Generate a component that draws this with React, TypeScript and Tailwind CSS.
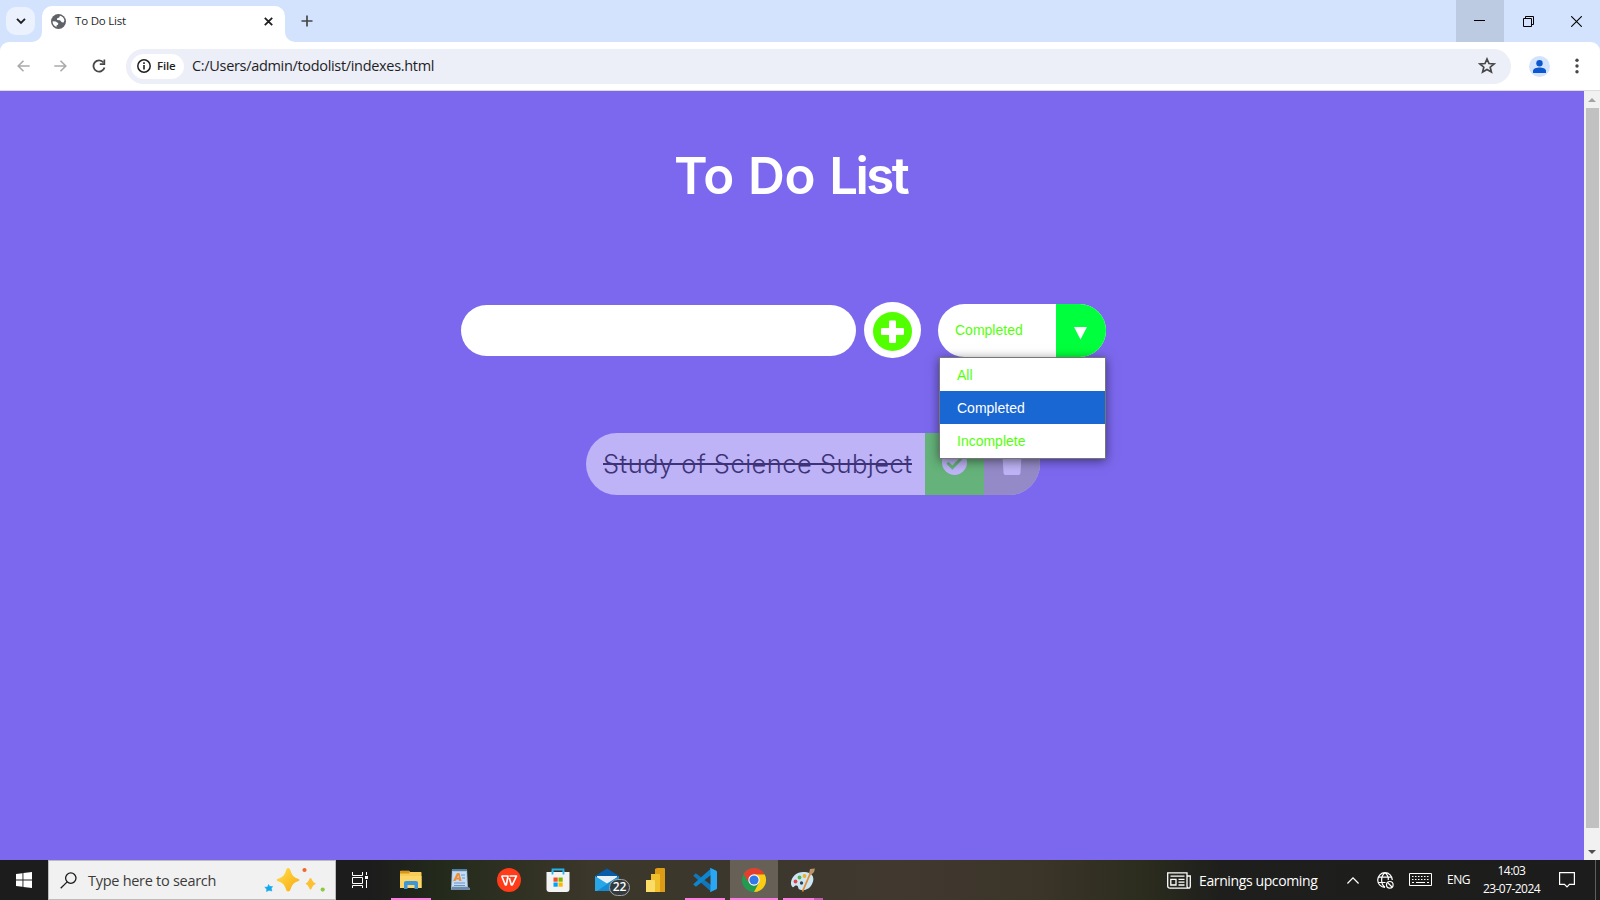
import React from "react";

const ui = "font-['Open_Sans','Noto_Sans',sans-serif] whitespace-nowrap";

function TabStrip() {
  return (
    <div className="flex h-[42px] bg-[#d3e3fd]">
      <div className="flex w-[42px] justify-start pl-[6px] pt-[7px]">
        <div className="flex h-7 w-[29px] items-center justify-center rounded-[10px] bg-[#ebf2fe]">
          <svg width="10" height="8" viewBox="0 0 10 8" fill="none" stroke="#1f1f1f" strokeWidth="1.9"><path d="M1 1.8 5 5.8 9 1.8" /></svg>
        </div>
      </div>
      <div className="relative mt-[6px] flex h-9 w-[243px] items-center rounded-t-[10px] bg-white">
        <svg className="absolute -left-[10px] bottom-0" width="10" height="10"><path d="M10 0V10H0A10 10 0 0 0 10 0Z" fill="#fff" /></svg>
        <svg className="absolute -right-[10px] bottom-0" width="10" height="10"><path d="M0 0V10H10A10 10 0 0 1 0 0Z" fill="#fff" /></svg>
        <svg className="mb-[6px] ml-[9px] shrink-0" width="15" height="15" viewBox="0 0 15 15">
          <circle cx="7.5" cy="7.5" r="7.5" fill="#5f6368" />
          <path d="M8.8 1.8 8.3 3.6 6.2 4.2 6 6 9 6.3 10.8 8.2 12.6 8.4 13.4 6.3A6 6 0 0 0 8.8 1.8ZM1.6 7.3 4.8 7.4 7.3 9.2 7 10.8 5.500 11.400 5.500 13A6 6 0 0 1 1.600 7.300Z" fill="#fff" />
        </svg>
        <span className={`${ui} mb-[7px] ml-[9px] w-[181px] text-[11.5px] leading-4 tracking-[-0.2px] text-[#1f1f1f]`}>To Do List</span>
        <svg className="mb-[6px] ml-[8px]" width="9" height="9" viewBox="0 0 9 9" stroke="#1f1f1f" strokeWidth="1.8"><path d="M.8.8 8.2 8.2M8.2.8.8 8.2" /></svg>
      </div>
      <svg className="ml-[16px] mt-[15px]" width="12" height="12" viewBox="0 0 12 12" stroke="#474747" strokeWidth="1.7"><path d="M6 .5V11.5M.5 6H11.5" /></svg>
      <div className="ml-auto flex">
        <div className="flex w-12 items-center justify-center bg-[#bccbe2]">
          <svg className="mr-px mb-px" width="11" height="11" viewBox="0 0 11 11" shapeRendering="crispEdges"><path d="M0 5h11v1H0Z" fill="#000" /></svg>
        </div>
        <div className="flex w-12 items-center justify-center">
          <svg width="11" height="11" viewBox="0 0 11 11" fill="none" stroke="#000"><path d="M.5 2.5h8v8h-8ZM2.5 2.5V.5h8v8h-2" /></svg>
        </div>
        <div className="flex w-12 items-center justify-center">
          <svg width="11" height="11" viewBox="0 0 11 11" stroke="#000" strokeWidth="1.1"><path d="M.2.2 10.8 10.8M10.8.2.2 10.8" /></svg>
        </div>
      </div>
    </div>
  );
}

function Toolbar() {
  return (
    <div className="bg-[#d3e3fd]">
      <div className="flex h-[49px] items-center rounded-t-[9px] border-b border-[#dcdcdc] bg-white">
        <svg className="ml-[17px]" width="13" height="12" viewBox="0 0 13 12" fill="none" stroke="#aaaaaa" strokeWidth="1.6"><path d="M12.7 6H1.3M6.5.7 1.2 6 6.5 11.3" /></svg>
        <svg className="ml-[24px]" width="13" height="12" viewBox="0 0 13 12" fill="none" stroke="#aaaaaa" strokeWidth="1.6"><path d="M.3 6H11.7M6.5.7 11.8 6 6.5 11.3" /></svg>
        <svg className="ml-[25px]" width="14" height="14" viewBox="0 0 14 14"><path d="M11.5 3.5A5.6 5.6 0 1 0 12.5 8.4" fill="none" stroke="#474747" strokeWidth="1.8" /><path d="M13.2.6V6H7.8V4.3H11.5V.6Z" fill="#474747" /></svg>
        <div className="ml-[20px] flex h-[35px] w-[1385px] items-center rounded-full bg-[#eceef8]">
          <div className="ml-[5px] flex h-[25px] w-[53px] items-center rounded-full bg-white">
            <svg className="ml-[6px] shrink-0" width="14" height="14" viewBox="0 0 14 14"><circle cx="7" cy="7" r="6.2" fill="none" stroke="#1f1f1f" strokeWidth="1.5" /><path d="M6.2 3.3h1.6v1.6H6.2ZM6.2 6h1.6v4.6H6.2Z" fill="#1f1f1f" /></svg>
            <span className={`${ui} ml-[6px] text-[11.5px] font-semibold tracking-[-0.2px] text-[#1f1f1f]`}>File</span>
          </div>
          <span className={`${ui} ml-[8px] text-[14.5px] tracking-[-0.32px] text-[#1f1f1f]`}>C:/Users/admin/todolist/indexes.html</span>
          <svg className="mb-px ml-auto mr-[15px]" width="18" height="17" viewBox="0 0 18 17" fill="none" stroke="#474747" strokeWidth="1.7"><path d="M9 2 11 6.5 16 7 12.2 10.2 13.4 15.1 9 12.5 4.6 15.1 5.8 10.2 2 7 7 6.5Z" /></svg>
        </div>
        <svg className="ml-[18px]" width="21" height="21" viewBox="0 0 21 21"><circle cx="10.5" cy="10.5" r="10.5" fill="#d3e3fd" /><circle cx="10.5" cy="7.3" r="3.2" fill="#0b57d0" /><path d="M4 17V15C4 12.7 7.5 11.6 10.5 11.6S17 12.7 17 15V17Z" fill="#0b57d0" /></svg>
        <svg className="ml-[25px]" width="4" height="16" viewBox="0 0 4 16" fill="#474747"><circle cx="2" cy="2.2" r="1.7" /><circle cx="2" cy="8" r="1.7" /><circle cx="2" cy="13.8" r="1.7" /></svg>
      </div>
    </div>
  );
}

function FilterSelect() {
  const row = "flex h-[33px] items-center pl-[17px] pt-[2px]";
  return (
    <div className="relative ml-[17px] h-[53px] w-[168px] font-['Liberation_Sans',Arial,sans-serif] text-[14px]">
      <div className="flex h-full overflow-hidden rounded-full bg-white">
        <div className="flex w-[118px] items-center pl-[17px] text-[#55ff0c]">Completed</div>
        <div className="flex flex-1 items-center justify-center bg-[#00ff3c]">
          <svg className="mt-[6px] mr-px" width="13" height="13" viewBox="0 0 13 13"><path d="M0 0H13L6.5 12.6Z" fill="#fff" /></svg>
        </div>
      </div>
      <div className="absolute left-[1px] top-[53px] z-10 h-[102px] w-[167px] border border-[#767676] bg-white text-[#55ff0c] shadow-[0_2px_10px_rgba(0,0,0,0.5)]">
        <div className={row}>All</div>
        <div className={`${row} bg-[#1967d2] text-white`}>Completed</div>
        <div className={row}>Incomplete</div>
      </div>
    </div>
  );
}

function Page() {
  return (
    <main className="w-[1584px] bg-[#7b68ee]">
      <h1 className="ml-[674px] pt-[53px] font-['Inter',sans-serif] text-[51px] font-semibold leading-[64px] tracking-[-0.5px] whitespace-nowrap text-white [word-spacing:2px]">To Do <span className="tracking-[-2.6px]">List</span></h1>
      <div className="ml-[461px] mt-[94px] flex items-center">
        <input className="h-[51px] w-[395px] rounded-full bg-white outline-none" aria-label="New task" />
        <button className="ml-[8px] flex h-[56px] w-[57px] items-center justify-center rounded-full bg-white" aria-label="Add">
          <svg className="mt-[2px]" width="39" height="39" viewBox="0 0 39 39"><circle cx="19.5" cy="19.5" r="19.5" fill="#52ff00" /><path d="M16 9.5Q16 8.5 17 8.5H22Q23 8.5 23 9.5V16H30Q31 16 31 17V22Q31 23 30 23H23V30Q23 31 22 31H17Q16 31 16 30V23H9Q8 23 8 22V17Q8 16 9 16H16Z" fill="#fff" /></svg>
        </button>
        <FilterSelect />
      </div>
      <div className="ml-[586px] mt-[75px] flex h-[62px] w-[454px] overflow-hidden rounded-full bg-[#bdb3f6]">
        <div className="flex w-[339px] items-center pl-[17px]">
          <span className="relative font-['Inter',sans-serif] text-[25.5px] font-light tracking-[0.47px] whitespace-nowrap text-[#3e3378]">
            Study of Science Subject
            <span className="absolute inset-x-0 top-[18px] h-[2px] bg-[#3e3378]" />
          </span>
        </div>
        <div className="flex w-[59px] items-center justify-center bg-[#65b27a] pb-[4px]">
          <svg width="25" height="25" viewBox="0 0 25 25"><circle cx="12.5" cy="12.5" r="12.5" fill="#bdb3f6" /><path d="M5.5 12.8 10.4 17.6 19.5 8.3" fill="none" stroke="#65b27a" strokeWidth="3" /></svg>
        </div>
        <div className="flex flex-1 items-center bg-[#948ac8] pb-[4px] pl-[17px]">
          <svg width="22" height="25" viewBox="0 0 22 25" fill="#bdb3f6"><path d="M0 1.5H6L7.5 0H14.5L16 1.5H22V4.5H0ZM1.5 6H20.5L19.5 23Q19.4 25 17.5 25H4.5Q2.6 25 2.5 23Z" /></svg>
        </div>
      </div>
    </main>
  );
}

function Scrollbar() {
  return (
    <div className="flex w-4 flex-col items-center bg-[#f1f1f1]">
      <svg className="mt-[7px]" width="8" height="4" viewBox="0 0 8 4"><path d="M0 4 4 0 8 4Z" fill="#a3a3a3" /></svg>
      <div className="mt-[6px] h-[720px] w-[13px] bg-[#c1c1c1]" />
      <svg className="mt-[22px]" width="8" height="4" viewBox="0 0 8 4"><path d="M0 0H8L4 4Z" fill="#505050" /></svg>
    </div>
  );
}

function Cell({ children, bar, active }: { children: React.ReactNode; bar?: React.ReactNode; active?: boolean }) {
  return (
    <div className={active ? "relative mr-px flex h-10 w-12 items-center justify-center bg-[#666057]" : "relative mr-px flex h-10 w-12 items-center justify-center"}>
      {children}
      {bar}
    </div>
  );
}

const bar = <span className="absolute bottom-0 left-1 h-[2px] w-10 bg-[#ff7be5]" />;

function Taskbar() {
  return (
    <footer className="flex h-10 bg-[linear-gradient(90deg,#1c1c1c_0,#1c1c1c_370px,#232a1b_440px,#3b372a_590px,#3c372d_760px,#41392f_900px,#3b3429_1040px,#2c2d1e_1140px,#1e1e1c_1220px,#1c1c1c_1600px)] text-white">
      <div className="flex w-12 items-center justify-center">
        <svg width="16" height="16" viewBox="0 0 16 16" fill="#fff"><path d="M0 2.1 6.5 1.2V7.5H0ZM7.4 1.1 16 0V7.5H7.4ZM0 8.4H6.5V14.8L0 13.9ZM7.4 8.4H16V16L7.4 14.9Z" /></svg>
      </div>
      <div className="flex w-[288px] items-center border border-[#bcbcbc] bg-[#f1f1f1]">
        <svg className="ml-[11px] shrink-0" width="17" height="17" viewBox="0 0 17 17" fill="none" stroke="#1a1a1a" strokeWidth="1.3"><circle cx="10.8" cy="6.1" r="5.2" /><path d="M7.2 9.9.7 16.3" /></svg>
        <span className={`${ui} ml-[11px] mt-px w-[176px] text-[14.5px] tracking-[-0.28px] text-[#3b3b3b]`}>Type here to search</span>
        <svg className="mb-px shrink-0" width="62" height="26" viewBox="0 0 62 26">
          <defs><linearGradient id="star" x1="0" y1="0" x2="1" y2="1"><stop stopColor="#ffe04a" /><stop offset="1" stopColor="#f9a811" /></linearGradient></defs>
          <path d="M24 1Q26 1 27 5Q28.500 9.500 32 11Q35.500 12 35.500 13Q35.500 14 32 15Q28.500 16.500 27 21Q26 24.500 24 24.500Q22.500 24.500 21.500 21Q20 16.500 16 15Q12.500 14 12.500 13Q12.500 12 16 11Q20 9.500 21.500 5Q22.500 1 24 1Z" fill="url(#star)" />
          <path d="M46.500 11Q47.500 11 48 13Q49 15.500 52 16.800Q49 18 48 20.500Q47.500 22.500 46.500 22.500Q45.500 22.500 45 20.500Q44 18 41.500 16.800Q44 15.500 45 13Q45.500 11 46.500 11Z" fill="#fcc130" />
          <path d="M4.500 17.500 5.800 19.500 8.500 19.500 7.300 21.500 7.800 24 5 23.300 2.500 24.500 2.800 22.200.800 20.300 3.700 20Z" fill="#12a9ec" stroke="#12a9ec" strokeWidth=".6" />
          <circle cx="40.500" cy="3" r="2.100" fill="#f4652e" /><circle cx="58.700" cy="22.600" r="2.100" fill="#89ca3e" />
        </svg>
      </div>
      <div className="mr-[3px] flex w-12 items-center justify-center">
        <svg width="16" height="16" viewBox="0 0 16 16" fill="none" stroke="#fff"><path d="M.5 0V3.500H10.500V0M.5 5.500H10.500V11.500H.5ZM.5 16V13.500H10.500V16M14.500 0V3M14.500 8V16" /><path d="M13 4h3v3h-3Z" fill="#fff" stroke="none" /></svg>
      </div>
      <Cell bar={bar}>
        <svg width="22" height="20" viewBox="0 0 22 20"><path d="M0 1.500Q0 .8 1 .8H9L10 2H21Q21.500 2 21.500 3V18H0Z" fill="#f9cb57" /><path d="M0 1.500Q0 1 1 1H9.500V3.500H0Z" fill="#d99513" /><path d="M0 6H21.500V18H0Z" fill="#fdd668" /><path d="M4 19V12.500Q4 11 6 11H16Q18 11 18 12.500V19H14.500V15H7.500V19Z" fill="#3d96d9" /></svg>
      </Cell>
      <Cell>
        <svg className="mb-[2px]" width="20" height="23" viewBox="0 0 20 23"><path d="M2 1H17L18 22H1Z" fill="#aec8e4" /><path d="M2 1H17V3H2Z" fill="#547da3" /><path d="M3 4H16L17 18H2Z" fill="#c5ddf4" /><path d="M3 13 7 5H9.500L11.500 13H9.300L9 11.500H6.300L5.500 13ZM7.200 9.800H8.800L8.400 7.200Z" fill="#ee8d35" /><path d="M11 7H15M12 10H15M4 15H15M4 17.500H15" stroke="#6894c8" /><path d="M1 22 2 19H18L20 20V22Z" fill="#6d8ba9" /></svg>
      </Cell>
      <Cell>
        <svg width="24" height="24" viewBox="0 0 24 24"><circle cx="12" cy="12" r="12" fill="#ff3b19" /><path d="M4.500 8H11L9.300 16.800 8.300 16.800 4.700 8M12.500 8H19.500L15.300 16.800H14.300L12.300 10" fill="none" stroke="#fff" strokeWidth="1.700" strokeLinejoin="round" /></svg>
      </Cell>
      <Cell>
        <svg width="24" height="24" viewBox="0 0 24 24"><path d="M6.500 7V1.500H17.500V7" fill="none" stroke="#26b4ec" strokeWidth="1.800" /><path d="M.500 4H23.500V21Q23.500 24 20.500 24H3.500Q.5 24 .5 21Z" fill="#f3f3f3" /><path d="M7.500 9.500h4.200v4.200H7.500Z" fill="#f05122" /><path d="M12.500 9.500h4.200v4.200h-4.200Z" fill="#7eb900" /><path d="M7.500 14.500h4.200v4.200H7.500Z" fill="#00a3ee" /><path d="M12.500 14.500h4.200v4.200h-4.200Z" fill="#feb800" /><path d="M6.500 3V6.500M17.500 3V6.500" stroke="#26b4ec" strokeWidth="1.800" /></svg>
      </Cell>
      <Cell>
        <svg className="mb-px" width="24" height="24" viewBox="0 0 24 24"><path d="M0 8 12 .5 24 8V14H0Z" fill="#075ba9" /><path d="M2 8H22V16H2Z" fill="#eaf0f4" /><path d="M0 8 12 15.500 24 8V23H0Z" fill="#27a6e8" /><path d="M24 8V23H2Z" fill="#168bd5" /></svg>
        <span className="absolute left-[26px] top-[19px] flex h-[17px] w-[21px] items-center justify-center rounded-full border border-[#a5a5a5] bg-[#333b3e] pb-px font-['Open_Sans',sans-serif] text-[12px] font-semibold leading-none">22</span>
      </Cell>
      <Cell>
        <svg className="mr-[2px]" width="20" height="24" viewBox="0 0 20 24"><path d="M12 0H19Q20 0 20 1V24H10V1Z" fill="#dd9c13" /><path d="M6 6H14Q15 6 15 7V24H6Z" fill="#efbf2c" /><path d="M1 12H9Q10 12 10 13V24H1Z" fill="#fadd66" /></svg>
      </Cell>
      <Cell bar={bar}>
        <svg width="24" height="24" viewBox="0 0 24 24"><path d="M1 7 2.500 5.500Q3 5.200 3.500 5.700L18 17V23.500L.5 8Q0 7.500 1 7Z" fill="#1177bb" /><path d="M1 17 2.500 18.500Q3 18.800 3.500 18.300L18 7V.5L.5 16Q0 16.500 1 17Z" fill="#0d86cf" /><path d="M17.500 0 23 2.500Q24 3 24 4V20Q24 21 23 21.500L17.500 24Q16.500 24 17.500 22.500V1.500Q16.500 0 17.500 0Z" fill="#2aa6f2" /></svg>
      </Cell>
      <Cell active bar={<span className="absolute bottom-0 left-0 h-[2px] w-12 bg-[#ff7be5]" />}>
        <svg width="24" height="24" viewBox="0 0 24 24"><circle cx="12" cy="12" r="12" fill="#229b50" /><path d="M12 12 1.600 6A12 12 0 0 1 22.400 6Z" fill="#e43e2f" /><path d="M12 6.500H22.700A12 12 0 0 1 12 24L17 14.500Z" fill="#fccb14" /><path d="M1.600 6 7 15 12 6.500Z" fill="#e43e2f" /><circle cx="12" cy="12" r="5.700" fill="#fff" /><circle cx="12" cy="12" r="4.600" fill="#3278e8" /></svg>
      </Cell>
      <Cell bar={<span className="absolute bottom-0 left-1 flex h-[2px] w-10 bg-[#c45cb1]"><span className="w-[31px] bg-[#ff7be5]" /></span>}>
        <svg width="24" height="24" viewBox="0 0 24 24"><path d="M0 16C-.5 9 6 3 14 4C21 4.500 24 9 21.500 15C19 21.500 13 23 8.500 21.500C6.500 20.500 8 18 5.500 17.500C3 17 3 20 1.500 19Q.3 18 0 16Z" fill="#cce6f4" /><circle cx="4.500" cy="13.500" r="1.900" fill="#e44343" /><circle cx="8.500" cy="9.500" r="1.900" fill="#51b64f" /><circle cx="13.500" cy="8" r="1.900" fill="#f2ae28" /><circle cx="10.500" cy="15" r="1.700" fill="#36434d" /><path d="M11.500 23.500 19.500 5" stroke="#e58c32" strokeWidth="1.800" /><path d="M18 6 19 1 24 .5 23 4 20 7Z" fill="#bd9465" /></svg>
      </Cell>
      <div className="ml-auto flex w-[433px] items-center">
        <svg className="shrink-0" width="24" height="17" viewBox="0 0 24 17" fill="none" stroke="#fff" strokeWidth="1.300"><path d="M20 4H23.300V14Q23.300 16.200 21.500 16.200H3Q.7 16.200.7 14V.9H20V14Q20 16 21.500 16" /><path d="M3.500 4.200H17.500M11.500 7.300H17.500M11.500 10.200H17.500M11.500 13H17.500M3.800 7.300H9V13H3.800Z" /></svg>
        <span className={`${ui} ml-[8px] w-[148px] text-[14px] tracking-[-0.38px]`}>Earnings upcoming</span>
        <svg className="shrink-0" width="12" height="7" viewBox="0 0 12 7" fill="none" stroke="#fff" strokeWidth="1.300"><path d="M.4 6.500 6 .9 11.600 6.500" /></svg>
        <svg className="ml-[18px] shrink-0" width="17" height="17" viewBox="0 0 17 17" fill="none" stroke="#fff" strokeWidth="1.200"><path d="M8 15.300A7.300 7.300 0 1 1 15.300 8M8 .7C3.500 4 3.500 12 8 15.300M8 .7C10.500 2.500 11.500 5.500 11.300 8M1.200 5.200H14.800M1.200 10.500H8.500" /><circle cx="12.800" cy="12.800" r="3.300" /><path d="M10.500 10.500 15 15" /></svg>
        <svg className="mb-px ml-[15px] shrink-0" width="23" height="13" viewBox="0 0 23 13" fill="none" stroke="#fff"><path d="M.5.5H22.500V12.500H.5Z" /><path d="M3 3.500H21M3 6.500H21" strokeDasharray="1.500 1.500" /><path d="M3 9.500H5M7 9.500H16M18 9.500H20" /></svg>
        <span className={`${ui} ml-[15px] w-[35px] text-[12px] tracking-[-0.5px]`}>ENG</span>
        <div className={`${ui} flex w-[59px] flex-col items-center text-[12px] leading-[18px] tracking-[-0.55px]`}><span>14:03</span><span>23-07-2024</span></div>
        <svg className="ml-[18px] shrink-0" width="16" height="16" viewBox="0 0 16 16" fill="none" stroke="#fff" strokeWidth="1.200"><path d="M.6.6H15.400V12.400H10.500L8 15 5.500 12.400H.6Z" /></svg>
        <span className="ml-[20px] h-10 w-px bg-[#5f5f5f]" />
      </div>
    </footer>
  );
}

export default function App() {
  return (
    <div className="h-[900px] w-[1600px] overflow-hidden">
      <TabStrip />
      <Toolbar />
      <div className="flex h-[769px]">
        <Page />
        <Scrollbar />
      </div>
      <Taskbar />
    </div>
  );
}
